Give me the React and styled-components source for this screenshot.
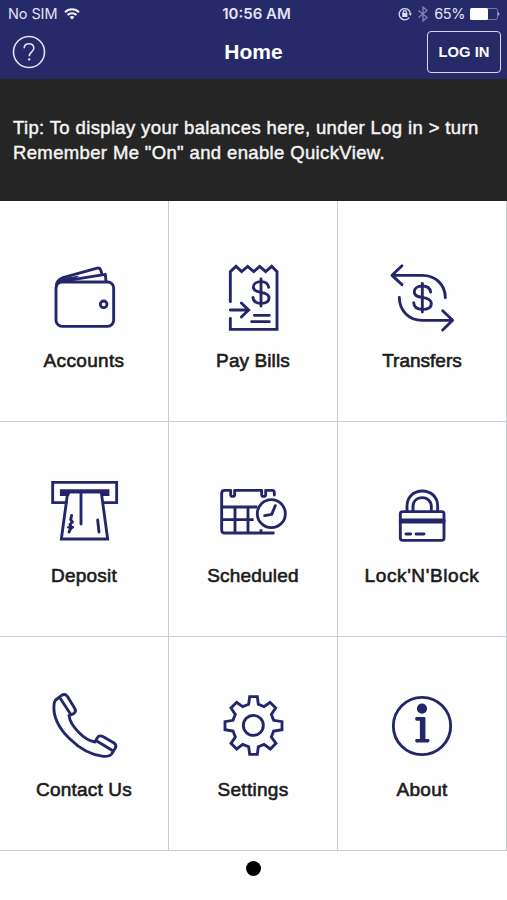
import React from 'react';
import styled, { createGlobalStyle } from 'styled-components';

const navy = '#24266a';

const GlobalStyle = createGlobalStyle`
  * {
    box-sizing: border-box;
  }
  body {
    margin: 0;
    background: #fff;
  }
`;

const Screen = styled.div`
  display: flex;
  flex-direction: column;
  width: 507px;
  height: 900px;
  overflow: hidden;
  background: #fefefe;
  font-family: 'Liberation Sans', Arial, sans-serif;
`;

const Header = styled.header`
  height: 79px;
  background: #272a68;
  color: #fff;
`;

const StatusBar = styled.div`
  display: grid;
  grid-template-columns: 1fr auto 1fr;
  align-items: center;
  height: 27px;
  padding: 0 7px 0 8px;
  font-family: Inter, sans-serif;
  font-size: 14.5px;
  color: #e3e3f4;
`;

const StatusGroup = styled.div`
  display: flex;
  align-items: center;
  justify-content: ${(props) => (props.$end ? 'flex-end' : 'flex-start')};
  gap: ${(props) => (props.$end ? '5px' : '7px')};
  letter-spacing: ${(props) => (props.$end ? '-0.4px' : '-0.1px')};

  svg {
    display: block;
  }
`;

const Time = styled.span`
  padding-left: 5px;
  font-size: 15px;
  font-weight: 600;
`;

const NavBar = styled.div`
  display: grid;
  grid-template-columns: 1fr auto 1fr;
  align-items: center;
  height: 50px;
  padding: 0 6px;
`;

const HelpButton = styled.button`
  width: 34px;
  height: 34px;
  margin-left: 6px;
  padding: 0;
  border: 0;
  background: none;

  svg {
    display: block;
  }
`;

const Title = styled.h1`
  margin: 0;
  font-size: 21px;
  font-weight: 700;
`;

const LoginButton = styled.button`
  justify-self: end;
  width: 74px;
  height: 42px;
  padding: 0;
  border: 1.5px solid #d5d6f0;
  border-radius: 4px;
  background: none;
  color: #fff;
  font-family: inherit;
  font-size: 14.8px;
  font-weight: 700;
  white-space: nowrap;
`;

const Tip = styled.p`
  height: 122px;
  margin: 0;
  padding: 37px 13px 0;
  background: #252525;
  color: #f4f4f4;
  font-size: 18.5px;
  line-height: 24.5px;
  letter-spacing: 0.36px;
  white-space: nowrap;
  -webkit-text-stroke: 0.45px currentColor;
`;

const Grid = styled.main`
  display: grid;
  grid-template-columns: 169px 169px 169px;
  grid-template-rows: 221px 215px 214px;
`;

const Tile = styled.div`
  display: flex;
  flex-direction: column;
  align-items: center;
  justify-content: flex-end;
  padding-bottom: 50px;
  border-right: 1px solid #c9ced0;
  border-bottom: 1px solid #c9ced0;
`;

const Icon = styled.svg`
  display: block;
  width: 100px;
  height: 90px;
  fill: none;
  stroke: ${navy};
  stroke-width: 8.6;
  stroke-linecap: round;
  stroke-linejoin: ${(props) => (props.$sharp ? 'miter' : 'round')};
`;

const Label = styled.span`
  height: 30px;
  padding-top: 9px;
  color: #1b1b1b;
  font-size: 19px;
  line-height: 22px;
  letter-spacing: ${(props) => props.$tracking};
  white-space: nowrap;
  -webkit-text-stroke: 0.6px currentColor;
`;

const Pager = styled.div`
  display: flex;
  justify-content: center;
  padding-top: 10px;
`;

const Dot = styled.span`
  width: 15px;
  height: 15px;
  border-radius: 50%;
  background: #000;
`;

const Accounts = () => (
  <Icon viewBox='-3 0 300 270'>
    <rect x='63' y='93' width='173' height='133' rx='18' />
    <path d='M64 106 C64 93 70 85 84 80 L184 52 Q194 49 197 57 L200 66' />
    <path d='M80 91 L211 70 L213 91' />
    <path d='M68 94 L78 84 L130 76 L88 92 Z' fill={navy} strokeWidth='3' />
    <circle cx='206' cy='160' r='10' />
  </Icon>
);

const PayBills = () => (
  <Icon viewBox='-6 0 300 270' $sharp>
    <path d='M76 152 V62 L93 46 L110 62 L128 46 L146 62 L164 46 L182 62 L200 46 L216 62 V235 H76 V202' />
    <path d='M76 177 H130 M109 156 L131 177 L109 198' />
    <path d='M148 193 H193 M140 212 H193' />
    <path d='M168 84 V165' />
    <path d='M191 109 C189 97 180 92 168 92 C155 92 145 98 145 108 C145 119 156 122 168 124 C181 126 192 130 192 141 C192 152 181 157 168 157 C155 157 145 152 144 139' />
  </Icon>
);

const Transfers = () => (
  <Icon viewBox='0 0 300 270'>
    <path d='M61 73 H151 C190 73 220 101 220 140 M90 44 L60 73 L90 101' />
    <path d='M82 139 C82 178 110 208 150 208 H242 M212 179 L242 208 L212 237' />
    <path d='M151 97 V183' />
    <path d='M176 123 C174 110 164 105 151 105 C137 105 127 112 127 122 C127 135 138 137 151 139 C165 141 178 145 178 158 C178 170 166 175 151 175 C136 175 126 169 125 155' />
  </Icon>
);

const Deposit = () => (
  <Icon viewBox='-3 0 300 270' $sharp>
    <path d='M94 110 H53 V49 H245 V110 H207' />
    <path d='M79 74 H219 V86 H202 L200 78 H102 L99 86 H79 Z' fill={navy} />
    <path d='M98 80 L79 219 H218 L199 80' />
    <path d='M138 80 V174 M188 162 L192 198' />
    <path d='M110 148 L107 161 L112 168 L105 176 L109 184 L102 198' />
    <path d='M101 184 H113' />
  </Icon>
);

const Scheduled = () => (
  <Icon viewBox='-6 0 300 270'>
    <path d='M208 87 V80 Q208 73 201 73 H182 V86 Q182 91 176 91 Q170 91 170 86 V73 H89 V86 Q89 91 83 91 Q77 91 77 86 V73 H59 Q50 73 50 82 V192 Q50 201 59 201 H205' />
    <path d='M51 123 H157 M51 161 H146 M90 124 V199 M129 124 V199 M168 190 V200' strokeLinecap='butt' />
    <circle cx='199' cy='143' r='42' />
    <path d='M211 119 L200 145 L179 149' />
  </Icon>
);

const LockNBlock = () => (
  <Icon viewBox='36 0 300 270'>
    <rect x='121' y='137' width='131' height='86' rx='7' />
    <rect x='121' y='162' width='131' height='6' />
    <path d='M138 204 H152 M168 204 H192' />
    <path d='M141 134 V120 C141 93 161 75 187 75 C213 75 233 93 233 120 V134 M159 134 V122 C159 106 170 95 187 95 C203 95 214 106 214 122 V134' />
  </Icon>
);

const ContactUs = () => (
  <Icon viewBox='-3 0 300 270'>
    <path d='M62 60 L80 46 Q90 40 97 49 L119 85 Q125 95 116 101 L102 107 C105 135 146 181 180 186 L187 173 Q192 165 202 169 L236 188 Q246 194 241 204 L230 222 Q224 230 205 229 C137 223 51 144 57 76 Q57 66 62 60 Z' />
    <path d='M77 57 L106 101 M184 182 L231 211' />
  </Icon>
);

const Settings = () => (
  <Icon viewBox='-6 0 300 270' $sharp>
    <path d='M134 50 H157 L160 73 L177 80 L195 67 L212 84 L199 103 L206 121 L231 125 V149 L206 153 L199 171 L213 190 L196 207 L177 193 L160 200 L157 223 H134 L131 200 L113 193 L95 207 L78 190 L91 171 L84 153 L60 149 V125 L84 121 L91 103 L78 84 L95 67 L113 80 L131 73 Z' />
    <circle cx='145' cy='136' r='30' />
  </Icon>
);

const About = () => (
  <Icon viewBox='0 0 300 270'>
    <circle cx='150' cy='138' r='86' />
    <circle cx='150' cy='86' r='11' fill={navy} />
    <path d='M134 115 H156 V181 H168 V183 H134 V181 H148 V118 H134 Z' fill={navy} />
  </Icon>
);

const tiles = [
  { label: 'Accounts', Picture: Accounts, tracking: '0.35px' },
  { label: 'Pay Bills', Picture: PayBills, tracking: '0.1px' },
  { label: 'Transfers', Picture: Transfers, tracking: '0' },
  { label: 'Deposit', Picture: Deposit, tracking: '0.2px' },
  { label: 'Scheduled', Picture: Scheduled, tracking: '0.2px' },
  { label: "Lock'N'Block", Picture: LockNBlock, tracking: '0.6px' },
  { label: 'Contact Us', Picture: ContactUs, tracking: '0.2px' },
  { label: 'Settings', Picture: Settings, tracking: '0.3px' },
  { label: 'About', Picture: About, tracking: '0.3px' },
];

const App = () => {
  return (
    <Screen>
      <GlobalStyle />
      <Header>
        <StatusBar>
          <StatusGroup>
            <span>No SIM</span>
            <svg width='16' height='12' viewBox='0 0 16 12' fill='none' stroke='#eeeefa' strokeWidth='2'>
              <path d='M1 4.3 C5 .3 11 .3 15 4.3 M3.5 7 C6 4.5 10 4.5 12.5 7' />
              <path d='M8 11.5 L5.5 9 Q8 7 10.5 9 Z' fill='#eeeefa' stroke='none' />
            </svg>
          </StatusGroup>
          <Time>10:56 AM</Time>
          <StatusGroup $end>
            <svg width='14' height='14' viewBox='0 0 14 14' fill='none' stroke='#dcdcf0' strokeWidth='1.3'>
              <path d='M11.2 10.7 A5.6 5.6 0 1 1 12.4 6.6' />
              <path d='M10.6 6.4 H14 L12.3 8.8 Z' fill='#dcdcf0' stroke='none' />
              <rect x='4.2' y='6' width='5.2' height='4' fill='#dcdcf0' stroke='none' />
              <path d='M5.2 6 V5 Q5.2 3.6 6.8 3.6 Q8.4 3.6 8.4 5 V6' />
            </svg>
            <svg width='12' height='16' viewBox='0 0 12 16' fill='none' stroke='#8384b3' strokeWidth='1.3'>
              <path d='M1.5 4.5 L10 11.5 L6 15 V1 L10 4.5 L1.5 11.5' />
            </svg>
            <span>65%</span>
            <svg width='30' height='12' viewBox='0 0 30 12'>
              <rect x='.5' y='.5' width='27' height='11' rx='2' fill='none' stroke='#777aaa' />
              <rect x='0' y='0' width='18' height='12' rx='1.5' fill='#fff' />
              <path d='M28.3 4 Q30.5 6 28.3 8 Z' fill='#dcdcf0' />
            </svg>
          </StatusGroup>
        </StatusBar>
        <NavBar>
          <HelpButton aria-label='Help'>
            <svg width='34' height='34' viewBox='0 0 34 34' fill='none' stroke='#e2e2f7' strokeWidth='1.6'>
              <circle cx='17' cy='17' r='15.5' />
              <path d='M12.2 13.2 C12.2 10.2 14 8.8 17 8.8 C20 8.8 21.8 10.6 21.8 13.2 C21.8 16.7 17.2 17 17.2 21.3' />
              <circle cx='17.2' cy='24.4' r='1.2' fill='#e2e2f7' stroke='none' />
            </svg>
          </HelpButton>
          <Title>Home</Title>
          <LoginButton>LOG IN</LoginButton>
        </NavBar>
      </Header>
      <Tip>
        Tip: To display your balances here, under Log in &gt; turn
        <br />
        Remember Me "On" and enable QuickView.
      </Tip>
      <Grid>
        {tiles.map(({ label, Picture, tracking }) => (
          <Tile key={label}>
            <Picture />
            <Label $tracking={tracking}>{label}</Label>
          </Tile>
        ))}
      </Grid>
      <Pager>
        <Dot />
      </Pager>
    </Screen>
  );
};

export default App;
